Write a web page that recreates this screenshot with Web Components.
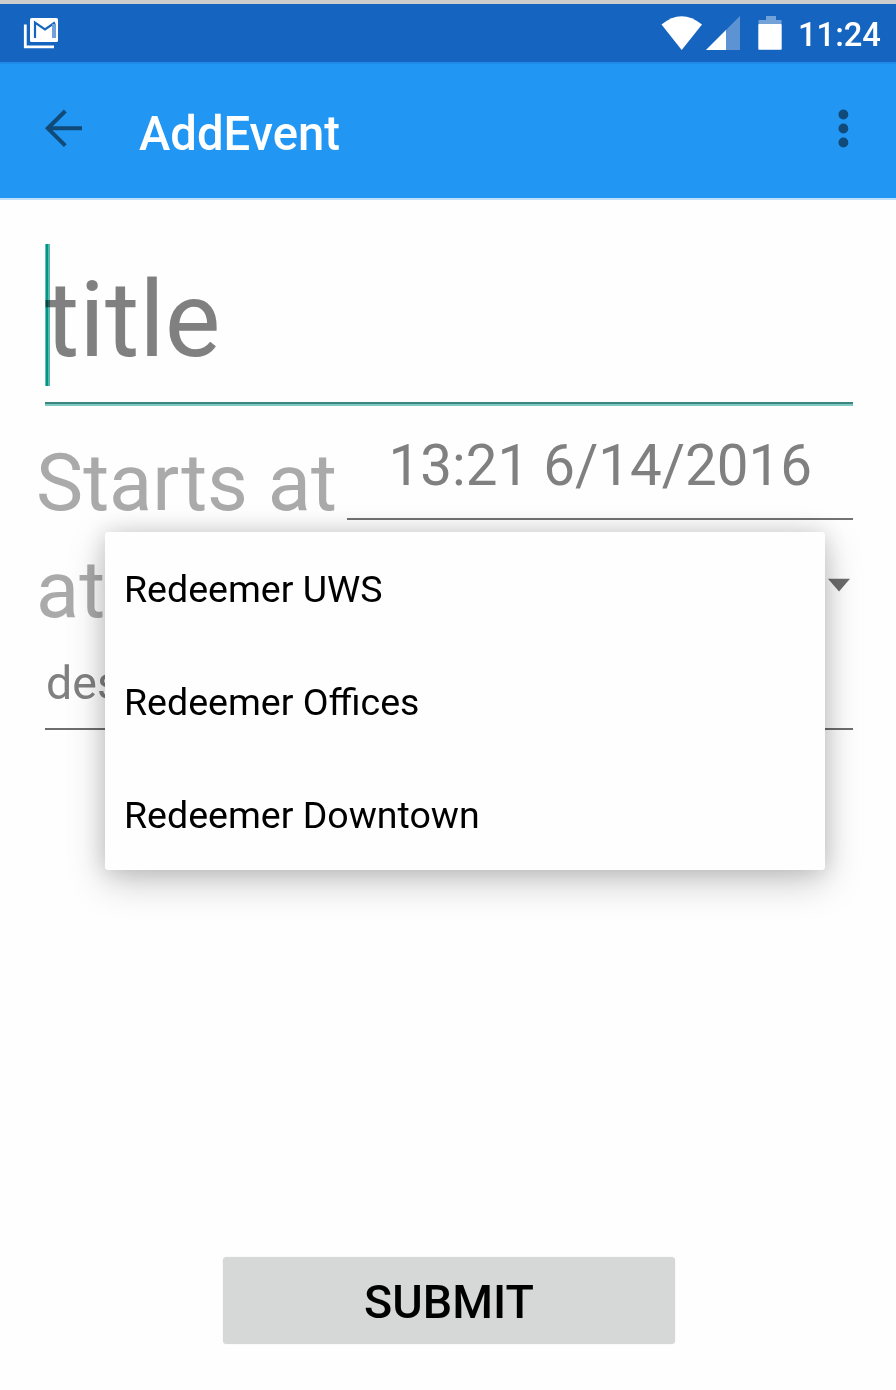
<!DOCTYPE html>
<html lang="en">
<head>
<meta charset="utf-8">
<title>AddEvent</title>
<style>
html,body{margin:0;padding:0;background:#fefefe}
body{width:896px;height:1390px;overflow:hidden;font-family:Roboto,"Liberation Sans",sans-serif}
</style>
</head>
<body>
<event-screen></event-screen>
<script>
const define = (name, html) => customElements.define(name, class extends HTMLElement {
  constructor() {
    super();
    const t = document.createElement('template');
    t.innerHTML = html;
    this.attachShadow({mode: 'open'}).append(t.content.cloneNode(true));
  }
});

define('status-bar', `
<style>
:host{display:flex;box-sizing:border-box;height:62px;border-top:4px solid #cdcdcd;background:#1565c0;color:#fff;justify-content:space-between;align-items:flex-start}
.mail{margin:12px 0 0 22px}
.right{display:flex}
.right svg{margin-top:10px}
time{display:block;width:84px;margin:12px 14px 0 14px;font-size:32.7px;font-weight:500;line-height:38px;white-space:nowrap}
svg{display:block}
</style>
<svg class="mail" width="40" height="36" viewBox="22 16 40 36">
<path d="M25.3 24.5V46.8H54" fill="none" stroke="#fff" stroke-width="2.8"/>
<rect x="30" y="18" width="28" height="24" rx="1.5" fill="#fff"/>
<path d="M35 38V22.5L45 29.3L55 22.5" fill="none" stroke="#1565c0" stroke-width="2.2"/>
<path d="M54 24V38" stroke="#73a2d9" stroke-width="4"/>
</svg>
<div class="right">
<svg width="124" height="40" viewBox="660 14 124 40">
<path d="M661.5 24.6Q681.5 7.8 702 24.6L681.7 50Z" fill="#fff"/>
<path d="M706 50L740 16V50Z" fill="#5d93d3"/>
<path d="M706 50L726 30V50Z" fill="#fff"/>
<path d="M758.5 24V20H766V16H776V20H781.5V24Z" fill="#73a2d9"/>
<rect x="758.3" y="24" width="23.4" height="25.8" rx=".8" fill="#fff"/>
</svg>
<time>11:24</time>
</div>`);

define('app-bar', `
<style>
:host{display:flex;box-sizing:border-box;height:138px;padding:0 46px 0 44px;background:#2196f3;border-top:2px solid #1e8be8;border-bottom:2px solid #bcdffb;align-items:flex-start}
svg{display:block;margin-top:44px}
h1{flex:1;margin:43px 0 0 55px;font-size:47.2px;line-height:54px;font-weight:500;color:#fff}
</style>
<svg width="40" height="40" viewBox="44 108 40 40"><path d="M65.3 111L47.8 128.3L65.3 145.6M48 128.3H82" fill="none" stroke="#104a79" stroke-width="4"/></svg>
<h1><slot></slot></h1>
<svg width="14" height="40" viewBox="836 108 14 40" fill="#104a79"><circle cx="843.4" cy="114.5" r="4.9"/><circle cx="843.4" cy="128.5" r="4.9"/><circle cx="843.4" cy="142.5" r="4.9"/></svg>`);

define('title-field', `
<style>
:host{display:block;box-sizing:border-box;position:relative;height:206px;margin:0 43px 0 45px;padding-top:59px;border-bottom:2px solid #7fcac3;box-shadow:inset 0 -2px #3b877f;font-size:105px;line-height:124px;color:#808080}
i{position:absolute;left:0;top:44px;width:5px;height:142px;background:linear-gradient(90deg,#66c0b7 0 1px,#009688 1px 3px,#55b9af 3px);mix-blend-mode:multiply}
</style>
<slot></slot><i></i>`);

define('date-row', `
<style>
:host{display:flex;height:114px;padding:0 43px 0 36px}
label{width:311px;margin-top:30px;font-size:79.4px;line-height:94px;color:#aaa;white-space:nowrap}
div{box-sizing:border-box;flex:1;padding:26px 0 0 41.5px;border-bottom:2px solid #737373;font-size:56.5px;line-height:68px;color:#808080;white-space:nowrap}
</style>
<label><slot name="label"></slot></label><div><slot></slot></div>`);

define('place-row', `
<style>
:host{display:flex;justify-content:space-between;height:110px;padding:0 46px 0 36px}
span{margin-top:23px;font-size:79.4px;line-height:94px;color:#aaa}
svg{display:block;margin-top:58px}
</style>
<span><slot></slot></span>
<svg width="22" height="14"><path d="M0 .8H22L11 13.5Z" fill="#6d6d6d"/></svg>`);

define('text-field', `
<style>
:host{display:block;box-sizing:border-box;height:100px;margin:0 43px 0 45px;padding:26px 0 0 1px;border-bottom:2px solid #6e6e6e;font-size:46.5px;line-height:54px;color:#808080}
</style><slot></slot>`);

define('drop-down', `
<style>
:host{display:flex;flex-direction:column;position:absolute;left:105px;top:532px;width:720px;height:338px;border-radius:3px;background:#fefefe;box-shadow:0 12px 38px rgba(0,0,0,.21),0 0 22px rgba(0,0,0,.14)}
</style><slot></slot>`);

define('drop-item', `
<style>
:host{display:flex;flex:1;align-items:center;box-sizing:border-box;padding:2px 0 0 19px;font-size:37.5px;line-height:44px;color:#000;white-space:nowrap}
</style><span><slot></slot></span>`);

define('raised-button', `
<style>
:host{display:flex;width:452px;height:87px;margin:527px 0 0 223px;border-radius:4px;background:#d6d7d7;box-shadow:0 0 1px #ccc;align-items:center;justify-content:center;font-size:46.6px;line-height:54px;font-weight:500;color:#000}
span{padding-top:3px}
</style><span><slot></slot></span>`);

define('event-screen', `
<style>
:host{display:flex;flex-direction:column;position:relative;width:896px;height:1390px;background:#fefefe;overflow:hidden}
</style>
<status-bar></status-bar>
<app-bar>AddEvent</app-bar>
<title-field>title</title-field>
<date-row><span slot="label">Starts at</span>13:21 6/14/2016</date-row>
<place-row>at</place-row>
<text-field>des</text-field>
<raised-button>SUBMIT</raised-button>
<drop-down>
<drop-item>Redeemer UWS</drop-item>
<drop-item>Redeemer Offices</drop-item>
<drop-item>Redeemer Downtown</drop-item>
</drop-down>`);
</script>
</body>
</html>
